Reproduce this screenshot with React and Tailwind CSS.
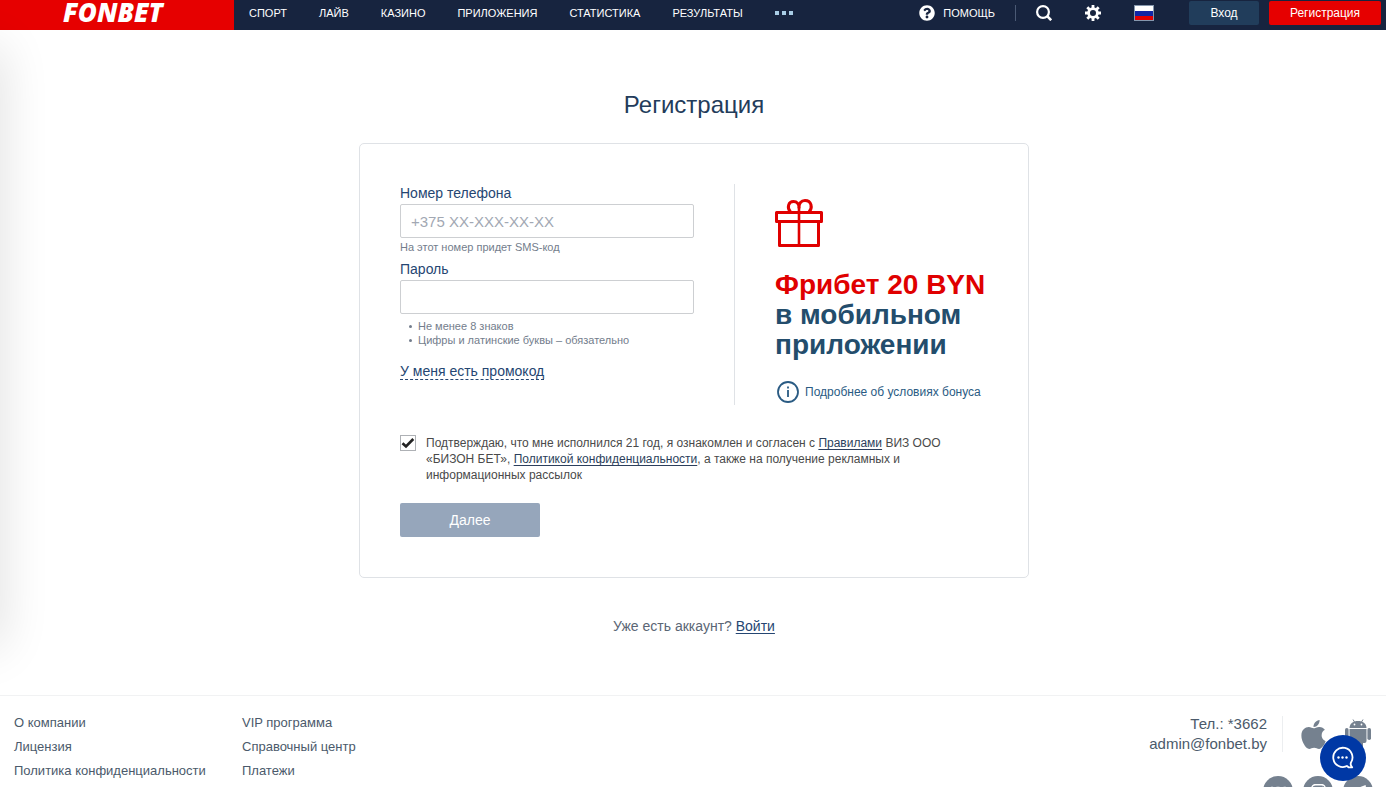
import { useState } from 'react';
import { FaApple, FaInstagram, FaQuestionCircle, FaTelegramPlane, FaVk } from 'react-icons/fa';

const NAV = ['СПОРТ', 'ЛАЙВ', 'КАЗИНО', 'ПРИЛОЖЕНИЯ', 'СТАТИСТИКА', 'РЕЗУЛЬТАТЫ'];

const FOOTER_LINKS = [
  ['О компании', 'Лицензия', 'Политика конфиденциальности'],
  ['VIP программа', 'Справочный центр', 'Платежи'],
];

function SearchIcon() {
  return (
    <svg width="16" height="16" viewBox="0 0 16 16" fill="none" stroke="currentColor" strokeWidth="2.2">
      <circle cx="7" cy="7" r="5.9" />
      <path d="M11.2 11.2 15.2 15.2" strokeWidth="2.6" />
    </svg>
  );
}

function GearIcon() {
  return (
    <svg width="16" height="16" viewBox="0 0 16 16" fill="none" stroke="currentColor">
      <circle cx="8" cy="8" r="4.4" strokeWidth="2.8" />
      <path
        d="M8 0v3M8 13v3M0 8h3M13 8h3M2.3 2.3l2.2 2.2M11.5 11.5l2.2 2.2M2.3 13.7l2.2-2.2M11.5 4.5l2.2-2.2"
        strokeWidth="2.8"
      />
    </svg>
  );
}

function FlagIcon() {
  return (
    <svg width="20" height="16" viewBox="0 0 20 16">
      <rect width="20" height="16" fill="#8597ad" />
      <rect x="1" y="1" width="18" height="5" fill="#fff" />
      <rect x="1" y="6" width="18" height="5" fill="#1226a5" />
      <rect x="1" y="11" width="18" height="4" fill="#e30000" />
    </svg>
  );
}

function GiftIcon() {
  return (
    <svg width="48" height="48" viewBox="0 0 48 48" fill="none" stroke="#e00000" strokeWidth="3" strokeLinejoin="round">
      <rect x="1.5" y="13.5" width="45" height="9" />
      <path d="M4.5 22.5v24h39v-24" />
      <path d="M24 8v38" strokeWidth="2.6" />
      <path d="M15.5 13C11.500 8.500 13.500 2.500 18.500 2.500c3.500 0 5.500 2.500 5.500 6 0-4 2-7 6-7 6.500 0 8 7 4 11.500" />
    </svg>
  );
}

function InfoIcon() {
  return (
    <svg width="22" height="22" viewBox="0 0 22 22" fill="none" stroke="currentColor" strokeWidth="1.8">
      <circle cx="11" cy="11" r="10" />
      <path d="M11 9v7M11 5.5v2" />
    </svg>
  );
}

function AndroidIcon() {
  return (
    <svg width="26" height="30" viewBox="0 0 26 30" fill="currentColor">
      <path d="M4.5 9C4.5 4.5 8.5 2 13 2s8.500 2.500 8.500 7z" />
      <path d="M8 .5 9.500 3M18 .5 16.500 3" stroke="currentColor" fill="none" />
      <circle cx="9.5" cy="5.5" r=".9" fill="#fff" />
      <circle cx="16.5" cy="5.5" r=".9" fill="#fff" />
      <path d="M4.5 10h17v12a2 2 0 0 1-2 2H18v4a2 2 0 0 1-4 0v-4h-2v4a2 2 0 0 1-4 0v-4H6.500a2 2 0 0 1-2-2z" />
      <rect x="0" y="9" width="3.6" height="12" rx="1.8" />
      <rect x="22.4" y="9" width="3.6" height="12" rx="1.8" />
    </svg>
  );
}

function ChatIcon() {
  return (
    <svg width="24" height="24" viewBox="0 0 24 24" fill="none" stroke="#fff" strokeWidth="1.8" strokeLinejoin="round">
      <path d="M16.5 19.8A9.600 9.600 0 1 1 20 16.500C19.300 18 19.800 19.800 21.200 21.300H17.500L16 20" />
      <g fill="#fff" stroke="none">
        <circle cx="7.5" cy="11.5" r="1.2" />
        <circle cx="11.5" cy="11.5" r="1.2" />
        <circle cx="15.5" cy="11.5" r="1.2" />
      </g>
    </svg>
  );
}

function Header() {
  return (
    <header className="flex h-[30px] bg-[#17243f] text-[11px] text-white">
      <a href="#" className="flex w-[234px] items-start justify-center bg-[#e60000] pr-2 font-['Open_Sans'] text-[26px] leading-6 font-extrabold italic">
        FONBET
      </a>
      <div className="flex flex-1 items-center pr-[5px] pb-1">
        <nav className="ml-[15px] flex items-center gap-8">
          {NAV.map((item) => (
            <a key={item} href="#">{item}</a>
          ))}
          <button type="button" aria-label="Ещё" className="flex gap-[3px]">
            <span className="size-1 bg-[#a9cde6]" />
            <span className="size-1 bg-[#a9cde6]" />
            <span className="size-1 bg-[#a9cde6]" />
          </button>
        </nav>
        <div className="ml-auto flex items-center">
          <a href="#" className="flex items-center gap-2">
            <FaQuestionCircle size={16} />
            ПОМОЩЬ
          </a>
          <span className="mx-5 h-4 w-px bg-[#4b5a75]" />
          <div className="flex items-center gap-[33px]">
            <button type="button" aria-label="Поиск"><SearchIcon /></button>
            <button type="button" aria-label="Настройки"><GearIcon /></button>
            <button type="button" aria-label="Язык"><FlagIcon /></button>
          </div>
          <button type="button" className="ml-[35px] h-6 w-[70px] rounded-xs bg-[#213d5b] text-[12px]">Вход</button>
          <button type="button" className="ml-[10px] h-6 w-[112px] rounded-xs bg-[#e60000] text-[12px]">Регистрация</button>
        </div>
      </div>
    </header>
  );
}

function Field({ id, label, ...props }) {
  return (
    <>
      <label htmlFor={id} className="mb-[2px] block text-[14px] leading-[18px] text-[#254672]">{label}</label>
      <input
        id={id}
        className="block h-[34px] w-full rounded-xs border border-[#cdcfd2] px-[10px] text-[15px] text-[#254672] outline-none placeholder:text-[#a2a8b3]"
        {...props}
      />
    </>
  );
}

function Promo() {
  return (
    <div className="flex-1 border-l border-[#dfe2e6] pt-[15px] pb-[2px] pl-10">
      <GiftIcon />
      <h2 className="mt-[23px] text-[28px] leading-[30px] font-bold text-[#234d6c]">
        <span className="text-[#e00000]">Фрибет 20 BYN</span>
        <br />
        в мобильном
        <br />
        приложении
      </h2>
      <a href="#" className="mt-[21px] ml-[2px] flex items-center gap-[6px] text-[12px] text-[#2a5b83]">
        <InfoIcon />
        Подробнее об условиях бонуса
      </a>
    </div>
  );
}

function RegistrationForm() {
  const [phone, setPhone] = useState('');
  const [password, setPassword] = useState('');
  const [agreed, setAgreed] = useState(true);

  return (
    <form
      onSubmit={(e) => e.preventDefault()}
      className="mt-[23px] w-full max-w-[670px] rounded-[5px] border border-[#dfe2e6] p-10"
    >
      <div className="flex gap-10">
        <div className="w-[294px]">
          <Field
            id="phone"
            type="tel"
            label="Номер телефона"
            placeholder="+375 XX-XXX-XX-XX"
            value={phone}
            onChange={(e) => setPhone(e.target.value)}
          />
          <p className="mb-1 text-[11px] leading-[18px] text-[#737d8c]">На этот номер придет SMS-код</p>
          <Field
            id="password"
            type="password"
            label="Пароль"
            value={password}
            onChange={(e) => setPassword(e.target.value)}
          />
          <ul className="mt-[5px] text-[11px] leading-[14px] text-[#737d8c]">
            {['Не менее 8 знаков', 'Цифры и латинские буквы – обязательно'].map((rule) => (
              <li key={rule} className="flex items-center gap-[6px] pl-[9px]">
                <span className="size-[3px] rounded-full bg-[#737d8c]" />
                {rule}
              </li>
            ))}
          </ul>
          <button type="button" className="mt-4 border-b border-dashed border-[#254672] text-[14px] leading-4 text-[#254672]">
            У меня есть промокод
          </button>
        </div>
        <Promo />
      </div>

      <div className="mt-[30px] flex gap-[10px] pr-9">
        <span className="relative size-4 shrink-0">
          <input
            id="agree"
            type="checkbox"
            checked={agreed}
            onChange={(e) => setAgreed(e.target.checked)}
            className="peer block size-4 appearance-none border border-[#aeb1b5] bg-white"
          />
          <svg viewBox="0 0 16 16" fill="none" stroke="#222" strokeWidth="2.6" className="pointer-events-none absolute inset-0 hidden peer-checked:block">
            <path d="M2.5 8.2 6 11.5 13.3 4" />
          </svg>
        </span>
        <label htmlFor="agree" className="text-[12px] leading-4 text-[#4a4a4a]">
          Подтверждаю, что мне исполнился 21 год, я ознакомлен и согласен с{' '}
          <a href="#" className="text-[#2c3f5c] underline underline-offset-2">Правилами</a> ВИЗ ООО «БИЗОН БЕТ»,{' '}
          <a href="#" className="text-[#2c3f5c] underline underline-offset-2">Политикой конфиденциальности</a>, а также на
          получение рекламных и информационных рассылок
        </label>
      </div>

      <button type="submit" className="mt-5 block h-[34px] w-[140px] rounded-xs bg-[#96a6bb] text-[14px] text-white">
        Далее
      </button>
    </form>
  );
}

function Footer() {
  return (
    <footer className="flex border-t border-[#f1f2f3] pr-[13px] pl-[14px] text-[#4b5a6b]">
      <div className="flex pt-[15px] text-[13px] leading-6">
        {FOOTER_LINKS.map((column) => (
          <ul key={column[0]} className="w-[228px]">
            {column.map((link) => (
              <li key={link}><a href="#">{link}</a></li>
            ))}
          </ul>
        ))}
      </div>
      <div className="ml-auto flex flex-col items-end pt-[18px]">
        <div className="flex pr-[2px]">
          <div className="pr-[15px] text-right text-[15px] leading-5">
            <p>Тел.: *3662</p>
            <a href="mailto:admin@fonbet.by">admin@fonbet.by</a>
          </div>
          <div className="mt-[2px] flex h-9 items-center gap-4 border-l border-[#eceef0] pl-[15px] text-[#75818f]">
            <a href="#" aria-label="iOS"><FaApple size={33} className="w-[31px]" /></a>
            <a href="#" aria-label="Android"><AndroidIcon /></a>
          </div>
        </div>
        <div className="mt-[22px] flex gap-[10px] text-white">
          {[FaVk, FaInstagram, FaTelegramPlane].map((Icon, i) => (
            <a key={i} href="#" className="flex size-[30px] items-center justify-center rounded-full bg-[#75818f]">
              <Icon size={17} />
            </a>
          ))}
        </div>
      </div>
    </footer>
  );
}

export default function App() {
  return (
    <div className="relative overflow-hidden bg-white font-['Liberation_Sans',Arial,sans-serif]">
      <div className="absolute top-12 bottom-40 -left-10 w-10 shadow-[0_0_50px_rgba(0,0,0,0.14)]" />
      <Header />
      <main className="flex flex-col items-center pt-[60px] pb-[59px] pl-[2px]">
        <h1 className="text-[24px] leading-[30px] text-[#233c5b]">Регистрация</h1>
        <RegistrationForm />
        <p className="mt-[38px] text-[14px] leading-5 text-[#5b6675]">
          Уже есть аккаунт?{' '}
          <a href="#" className="text-[#254672] underline underline-offset-2">Войти</a>
        </p>
      </main>
      <Footer />
      <button
        type="button"
        aria-label="Чат"
        className="fixed right-5 bottom-[6px] flex size-[46px] items-center justify-center rounded-full bg-[#0038a5]"
      >
        <ChatIcon />
      </button>
    </div>
  );
}
